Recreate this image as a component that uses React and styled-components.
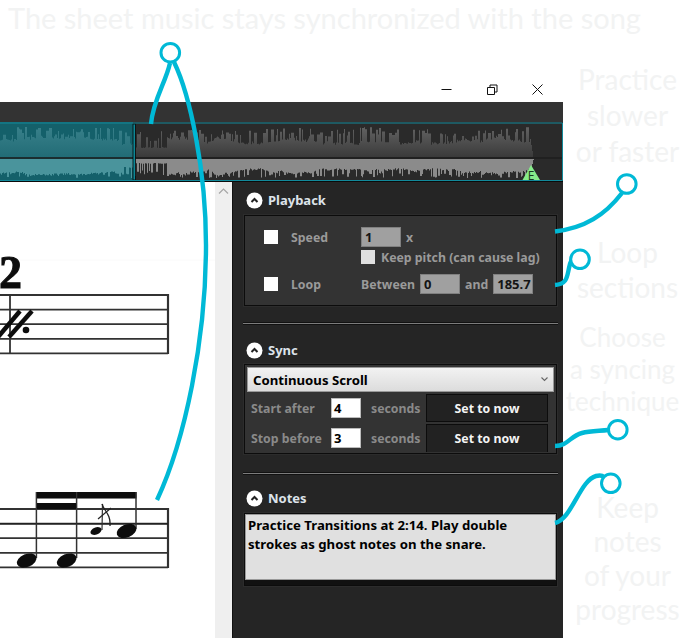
import React from 'react';
import styled, { createGlobalStyle } from 'styled-components';

const GlobalStyle = createGlobalStyle`
  html, body {
    margin: 0;
    padding: 0;
    background: #fff;
  }
`;

const Page = styled.div`
  position: relative;
  width: 682px;
  height: 638px;
  overflow: hidden;
  background: #fff;
  font-family: 'Noto Sans', 'Open Sans', sans-serif;
`;

const Headline = styled.h1`
  margin: 0;
  height: 62px;
  padding: 0 0 0 8px;
  box-sizing: border-box;
  font-family: Lato, sans-serif;
  font-weight: 400;
  font-size: 29px;
  line-height: 36px;
  color: #f2f3f3;
  white-space: nowrap;
`;

const Body = styled.div`
  display: flex;
  height: 576px;
`;

const Window = styled.div`
  width: 563px;
  display: flex;
  flex-direction: column;
`;

const TitleBar = styled.div`
  height: 40px;
  display: flex;
  justify-content: flex-end;
  align-items: flex-end;
  padding: 0 20px 7px 0;
  box-sizing: border-box;
  gap: 34.5px;
`;

const Toolbar = styled.div`
  height: 20px;
  background: #333;
`;

const WaveStrip = styled.div`
  height: 60px;
  background: #252525;
  svg {
    display: block;
  }
`;

const Main = styled.div`
  flex: 1;
  display: flex;
  min-height: 0;
`;

const Sheet = styled.div`
  width: 215px;
  background: #fff;
  svg {
    display: block;
  }
`;

const ScrollTrack = styled.div`
  width: 17px;
  background: #efefef;
  border-right: 1px solid #111;
  display: flex;
  justify-content: center;
  padding-top: 6px;
  box-sizing: content-box;
`;

const Sidebar = styled.div`
  width: 330px;
  background: #252525;
  padding: 10px 6px 0 11px;
  box-sizing: border-box;
  font-size: 12.3px;
  font-weight: 700;
`;

const SectionHead = styled.div`
  display: flex;
  align-items: center;
  gap: 5px;
  height: 16px;
  margin-left: 2px;
  margin-bottom: ${(p) => p.$gap}px;
  color: #dde3ea;
  font-size: 13px;
`;

const Panel = styled.div`
  background: #333;
  border: 1px solid #0c0c0c;
  box-shadow: 0 0 0 1px #2c2c2c;
  box-sizing: border-box;
`;

const PlaybackPanel = styled(Panel)`
  height: 91px;
  padding: 11px 0 0 19px;
  display: grid;
  grid-template-columns: 14px 57px 1fr;
  grid-template-rows: 20px 14px 27px;
  column-gap: 13px;
  row-gap: 3px;
  align-items: center;
  color: #9a9a9a;
`;

const LoopRow = styled.div`
  grid-column: 1 / -1;
  align-self: end;
  display: grid;
  grid-template-columns: 14px 57px 1fr;
  column-gap: 13px;
  align-items: center;
`;

const Inline = styled.div`
  display: flex;
  align-items: center;
  gap: ${(p) => p.$gap || 5}px;
  white-space: nowrap;
`;

const Check = styled.span`
  display: block;
  width: 14px;
  height: 14px;
  background: ${(p) => (p.$muted ? '#e0e0e0' : '#fff')};
`;

const Field = styled.div`
  width: ${(p) => p.$width || 40}px;
  height: 20px;
  box-sizing: border-box;
  padding-left: ${(p) => (p.$white ? 2 : 3)}px;
  background: ${(p) => (p.$white ? '#fff' : '#a0a0a0')};
  border: 1px solid ${(p) => (p.$white ? '#bbb' : '#808080')};
  color: ${(p) => (p.$white ? '#000' : '#151515')};
  line-height: 18px;
  font-size: 13px;
`;

const Separator = styled.div`
  height: 1px;
  background: #7c7c7c;
  border: solid #111;
  border-width: 1px 0;
  margin: ${(p) => p.$top}px -1px ${(p) => p.$bottom}px -1px;
  width: 315px;
`;

const SyncPanel = styled(Panel)`
  height: 90px;
  padding: 2px 2px 0;
  overflow: hidden;
`;

const SelectBox = styled.div`
  height: 25px;
  display: flex;
  align-items: center;
  justify-content: space-between;
  padding: 0 5px;
  background: linear-gradient(#f2f2f2, #dcdcdc);
  border: 1px solid #999;
  box-sizing: border-box;
  color: #000;
  font-size: 13.2px;
`;

const SyncRow = styled.div`
  display: grid;
  grid-template-columns: 80px 30px 65px 122px;
  height: 30px;
  box-sizing: border-box;
  padding: 2px 0 0 4px;
  align-items: center;
  color: #8a8a8a;
`;

const Seconds = styled.span`
  padding-left: 10px;
`;

const NowButton = styled.button`
  align-self: stretch;
  margin: 0;
  padding: 0;
  background: #222;
  border: 1px solid #0c0c0c;
  border-bottom: ${(p) => (p.$open ? 'none' : '1px solid #0c0c0c')};
  color: #f4f4f4;
  font: inherit;
`;

const NotesPanel = styled(Panel)`
  height: 73px;
  background: #111;
`;

const NotesBox = styled.div`
  height: 66px;
  box-sizing: border-box;
  padding: 1px 2px;
  background: #e0e0e0;
  border: 1px solid #999;
  color: #000;
  font-size: 13.2px;
  line-height: 19px;
`;

const Captions = styled.div`
  flex: 1;
  color: #f2f3f3;
  font-family: Lato, sans-serif;
  text-align: center;
  white-space: nowrap;
`;

const Caption = styled.div`
  font-size: ${(p) => p.$size}px;
  line-height: ${(p) => p.$line}px;
  margin-top: ${(p) => p.$top}px;
  margin-left: ${(p) => p.$shift || 0}px;
`;

const Overlay = styled.svg`
  position: absolute;
  left: 0;
  top: 0;
  pointer-events: none;
`;

// same numbers every render, so the wave does not jump
function makeRandom(seed) {
  let s = seed;
  return () => {
    s = (s * 16807) % 2147483647;
    return s / 2147483647;
  };
}

function buildWave() {
  const rnd = makeRandom(4711);
  let top = 'M0 157';
  let bottom = 'M0 159';
  let drift = 0;
  let topRun = 0;
  let bottomRun = 0;
  let topPeak = 130;
  let bottomPeak = 175;
  for (let x = 0; x <= 533; x++) {
    drift = Math.max(-3, Math.min(3, drift + (rnd() - 0.5) * 1.6));
    const low = x >= 136 && x < 167;
    const fade = x >= 122 && x < 136;
    if (topRun === 0 && rnd() < 0.3) {
      topRun = 1 + Math.floor(rnd() * 2.5);
      topPeak = low ? 131 + rnd() * 12 : 127 + rnd() * 10;
    }
    if (bottomRun === 0 && rnd() < 0.25) {
      bottomRun = 1 + Math.floor(rnd() * 2);
      bottomPeak = low ? 170 + rnd() * 6 : 173 + rnd() * 5;
    }
    let t = low ? 147 + rnd() : fade ? 143 + rnd() * 2 : 139 + drift + rnd() * 3;
    let b = low ? 163 + rnd() : fade ? 167 + rnd() : 171 - drift + rnd() * 2;
    if (topRun > 0) {
      t = topPeak;
      topRun--;
    }
    if (bottomRun > 0) {
      b = bottomPeak;
      bottomRun--;
    }
    if (x > 529) {
      t = 133 + (x - 529) * 6;
      b = 176 - (x - 529) * 4;
    }
    top += `L${x} ${t.toFixed(1)}L${x + 1} ${t.toFixed(1)}`;
    bottom += `L${x} ${b.toFixed(1)}L${x + 1} ${b.toFixed(1)}`;
  }
  return { top: top + 'L534 157Z', bottom: bottom + 'L534 159Z' };
}

const wave = buildWave();

function Waveform() {
  return (
    <svg width="563" height="60" viewBox="0 122 563 60">
      <defs>
        <linearGradient id="darkTop" x1="0" y1="127" x2="0" y2="157" gradientUnits="userSpaceOnUse">
          <stop offset="0" stopColor="#626262" />
          <stop offset="1" stopColor="#3a3a3a" />
        </linearGradient>
        <linearGradient id="tealTop" x1="0" y1="127" x2="0" y2="157" gradientUnits="userSpaceOnUse">
          <stop offset="0" stopColor="#38808a" />
          <stop offset="1" stopColor="#226c76" />
        </linearGradient>
        <clipPath id="played">
          <rect x="0" y="122" width="133" height="60" />
        </clipPath>
      </defs>
      <rect x="0" y="122" width="563" height="59" fill="#2a2a2a" />
      <path d={wave.top} fill="url(#darkTop)" />
      <path d={wave.bottom} fill="#8b8b8b" />
      <g clipPath="url(#played)">
        <rect x="0" y="122" width="133" height="59" fill="#14606a" />
        <path d={wave.top} fill="url(#tealTop)" />
        <path d={wave.bottom} fill="#4a949c" />
      </g>
      <rect x="0" y="157" width="563" height="2" fill="#1d1d1d" opacity="0.75" />
      <rect x="133" y="124" width="2.4" height="56" fill="#0d8796" stroke="#060606" strokeWidth="0.8" />
      <path d="M0 123H562.5V180.5H0" fill="none" stroke="#12899a" strokeWidth="1" />
      <rect x="0" y="181" width="563" height="1" fill="#0b0b0b" />
      <path d="M531 165L540 180H522.5Z" fill="#86ec8a" />
      <text x="531" y="179.5" textAnchor="middle" fontSize="12" fontFamily="'Open Sans', sans-serif" fill="#1c3a20">
        E
      </text>
    </svg>
  );
}

function Staff({ top, end }) {
  return (
    <g stroke="#333" strokeWidth="1.8">
      {[0, 1, 2, 3, 4].map((i) => (
        <line key={i} x1="0" x2={end} y1={top + i * 14.6} y2={top + i * 14.6} />
      ))}
      <line x1={end} x2={end} y1={top - 1} y2={top + 59} strokeWidth="2.2" />
    </g>
  );
}

function SheetMusic() {
  return (
    <svg width="215" height="456" viewBox="0 182 215 456">
      <defs>
        <filter id="soft">
          <feGaussianBlur stdDeviation="0.35" />
        </filter>
      </defs>
      <line x1="0" x2="215" y1="260" y2="260" stroke="#fafafa" />
      <g filter="url(#soft)">
        <text
          x="-1"
          y="288"
          fontFamily="'Liberation Serif', serif"
          fontWeight="700"
          fontSize="46"
          fill="#111"
          stroke="#111"
          strokeWidth="1"
        >
          2
        </text>
        <Staff top={295} end={168} />
        <line x1="10" x2="10" y1="295" y2="353" stroke="#333" strokeWidth="1.8" />
        <line x1="-2" y1="337" x2="20" y2="311" stroke="#111" strokeWidth="4.5" />
        <line x1="9" y1="337" x2="32" y2="311" stroke="#111" strokeWidth="4.5" />
        <circle cx="26" cy="330" r="3.3" fill="#111" />

        <Staff top={509} end={168} />
        <line x1="0" x2="168" y1="524" y2="524" stroke="#111" strokeWidth="1" />
        <rect x="36" y="492" width="100.5" height="6.5" fill="#0a0a0a" />
        <rect x="36" y="503" width="40.5" height="6" fill="#0a0a0a" />
        <g stroke="#333" strokeWidth="1.5">
          <line x1="36.4" x2="36.4" y1="492" y2="558" />
          <line x1="76.6" x2="76.6" y1="492" y2="558" />
          <line x1="136" x2="136" y1="492" y2="529" />
          <line x1="102" x2="102.5" y1="530" y2="504" strokeWidth="1.2" />
        </g>
        <path d="M102 504C104 511 111 514 110 526" fill="none" stroke="#222" strokeWidth="1.3" />
        <line x1="98" y1="519" x2="111" y2="508" stroke="#222" strokeWidth="1.2" />
        <ellipse cx="26.7" cy="560.5" rx="10.3" ry="6.4" fill="#0a0a0a" transform="rotate(-22 26.7 560.5)" />
        <ellipse cx="66.7" cy="560.5" rx="10.3" ry="6.4" fill="#0a0a0a" transform="rotate(-22 66.7 560.5)" />
        <ellipse cx="126.5" cy="531" rx="10.3" ry="6.4" fill="#0a0a0a" transform="rotate(-22 126.5 531)" />
        <ellipse cx="96" cy="531" rx="5.8" ry="3.5" fill="#0a0a0a" transform="rotate(-22 96 531)" />
      </g>
    </svg>
  );
}

function CollapseIcon() {
  return (
    <svg width="17" height="17" viewBox="0 0 17 17">
      <circle cx="8.5" cy="8.5" r="8" fill="#fff" />
      <path d="M5.5 10L8.5 7L11.5 10" fill="none" stroke="#222" strokeWidth="2" />
    </svg>
  );
}

const CALLOUT_BLUE = '#00b9d6';

const callouts = [
  { cx: 170.3, cy: 52.7 },
  { cx: 626.8, cy: 184 },
  { cx: 580, cy: 259.3 },
  { cx: 617.8, cy: 429.7 },
  { cx: 610.8, cy: 483.3 },
];

const strokes = [
  'M170 63C166 82 153 100 151 124',
  'M174 62C190 95 206 170 206 245C206 340 185 440 157 500',
  'M622 193C605 215 585 228 555 231.5',
  'M555 285C567 284 567 277 569 268C570 263 571 261 572 259',
  'M555 446C568 446 570 436 582 433C590 431 600 431 608 430',
  'M555 523C572 519 580 480 596 476C600 475 603 476 604 477',
];

function CalloutLines() {
  return (
    <Overlay width="682" height="638" viewBox="0 0 682 638">
      {strokes.map((d) => (
        <path key={d} d={d} fill="none" stroke={CALLOUT_BLUE} strokeWidth="4.4" />
      ))}
      {callouts.map((c) => (
        <circle key={c.cx} cx={c.cx} cy={c.cy} r="9.3" fill="#fff" stroke={CALLOUT_BLUE} strokeWidth="3" />
      ))}
    </Overlay>
  );
}

export default function App() {
  return (
    <Page>
      <GlobalStyle />
      <Headline>The sheet music stays synchronized with the song</Headline>
      <Body>
        <Window>
          <TitleBar>
            <svg width="11" height="11" viewBox="0 0 11 11">
              <line x1="0.5" x2="10.5" y1="5.5" y2="5.5" stroke="#111" />
            </svg>
            <svg width="11" height="11" viewBox="0 0 11 11">
              <path d="M0.5 3.5H7.5V10.5H0.5ZM3 3.5V1H10V8H7.5" fill="none" stroke="#111" />
            </svg>
            <svg width="11" height="11" viewBox="0 0 11 11">
              <path d="M0.5 0.5L10.5 10.5M10.5 0.5L0.5 10.5" fill="none" stroke="#111" />
            </svg>
          </TitleBar>
          <Toolbar />
          <WaveStrip>
            <Waveform />
          </WaveStrip>
          <Main>
            <Sheet>
              <SheetMusic />
            </Sheet>
            <ScrollTrack>
              <svg width="11" height="6" viewBox="0 0 11 6">
                <path d="M1 5.5L5.5 1L10 5.5" fill="none" stroke="#a6a6a6" strokeWidth="1.2" />
              </svg>
            </ScrollTrack>
            <Sidebar>
              <SectionHead $gap={7}>
                <CollapseIcon />
                Playback
              </SectionHead>
              <PlaybackPanel>
                <Check />
                <span>Speed</span>
                <Inline>
                  <Field>1</Field>x
                </Inline>
                <span />
                <span />
                <Inline $gap={6}>
                  <Check $muted />
                  Keep pitch (can cause lag)
                </Inline>
                <LoopRow>
                  <Check />
                  <span>Loop</span>
                  <Inline>
                    Between <Field>0</Field> and <Field>185.7</Field>
                  </Inline>
                </LoopRow>
              </PlaybackPanel>
              <Separator $top={16} $bottom={17} />
              <SectionHead $gap={6}>
                <CollapseIcon />
                Sync
              </SectionHead>
              <SyncPanel>
                <SelectBox>
                  Continuous Scroll
                  <svg width="7" height="5" viewBox="0 0 7 5">
                    <path d="M0.5 0.5L3.5 3.5L6.5 0.5" fill="none" stroke="#666" strokeWidth="1.1" />
                  </svg>
                </SelectBox>
                <SyncRow>
                  <span>Start after</span>
                  <Field $white $width={30}>4</Field>
                  <Seconds>seconds</Seconds>
                  <NowButton>Set to now</NowButton>
                </SyncRow>
                <SyncRow>
                  <span>Stop before</span>
                  <Field $white $width={30}>3</Field>
                  <Seconds>seconds</Seconds>
                  <NowButton $open>Set to now</NowButton>
                </SyncRow>
              </SyncPanel>
              <Separator $top={18} $bottom={15} />
              <SectionHead $gap={7}>
                <CollapseIcon />
                Notes
              </SectionHead>
              <NotesPanel>
                <NotesBox>
                  Practice Transitions at 2:14. Play double
                  <br />
                  strokes as ghost notes on the snare.
                </NotesBox>
              </NotesPanel>
            </Sidebar>
          </Main>
        </Window>
        <Captions>
          <Caption $size={28} $line={36} $top={-1} $shift={10}>
            Practice
            <br />
            slower
            <br />
            or faster
          </Caption>
          <Caption $size={28} $line={35} $top={66} $shift={10}>
            Loop
            <br />
            sections
          </Caption>
          <Caption $size={26} $line={32} $top={16}>
            Choose
            <br />
            a syncing
            <br />
            technique
          </Caption>
          <Caption $size={28} $line={34} $top={73} $shift={10}>
            Keep
            <br />
            notes
            <br />
            of your
            <br />
            progress
          </Caption>
        </Captions>
      </Body>
      <CalloutLines />
    </Page>
  );
}
